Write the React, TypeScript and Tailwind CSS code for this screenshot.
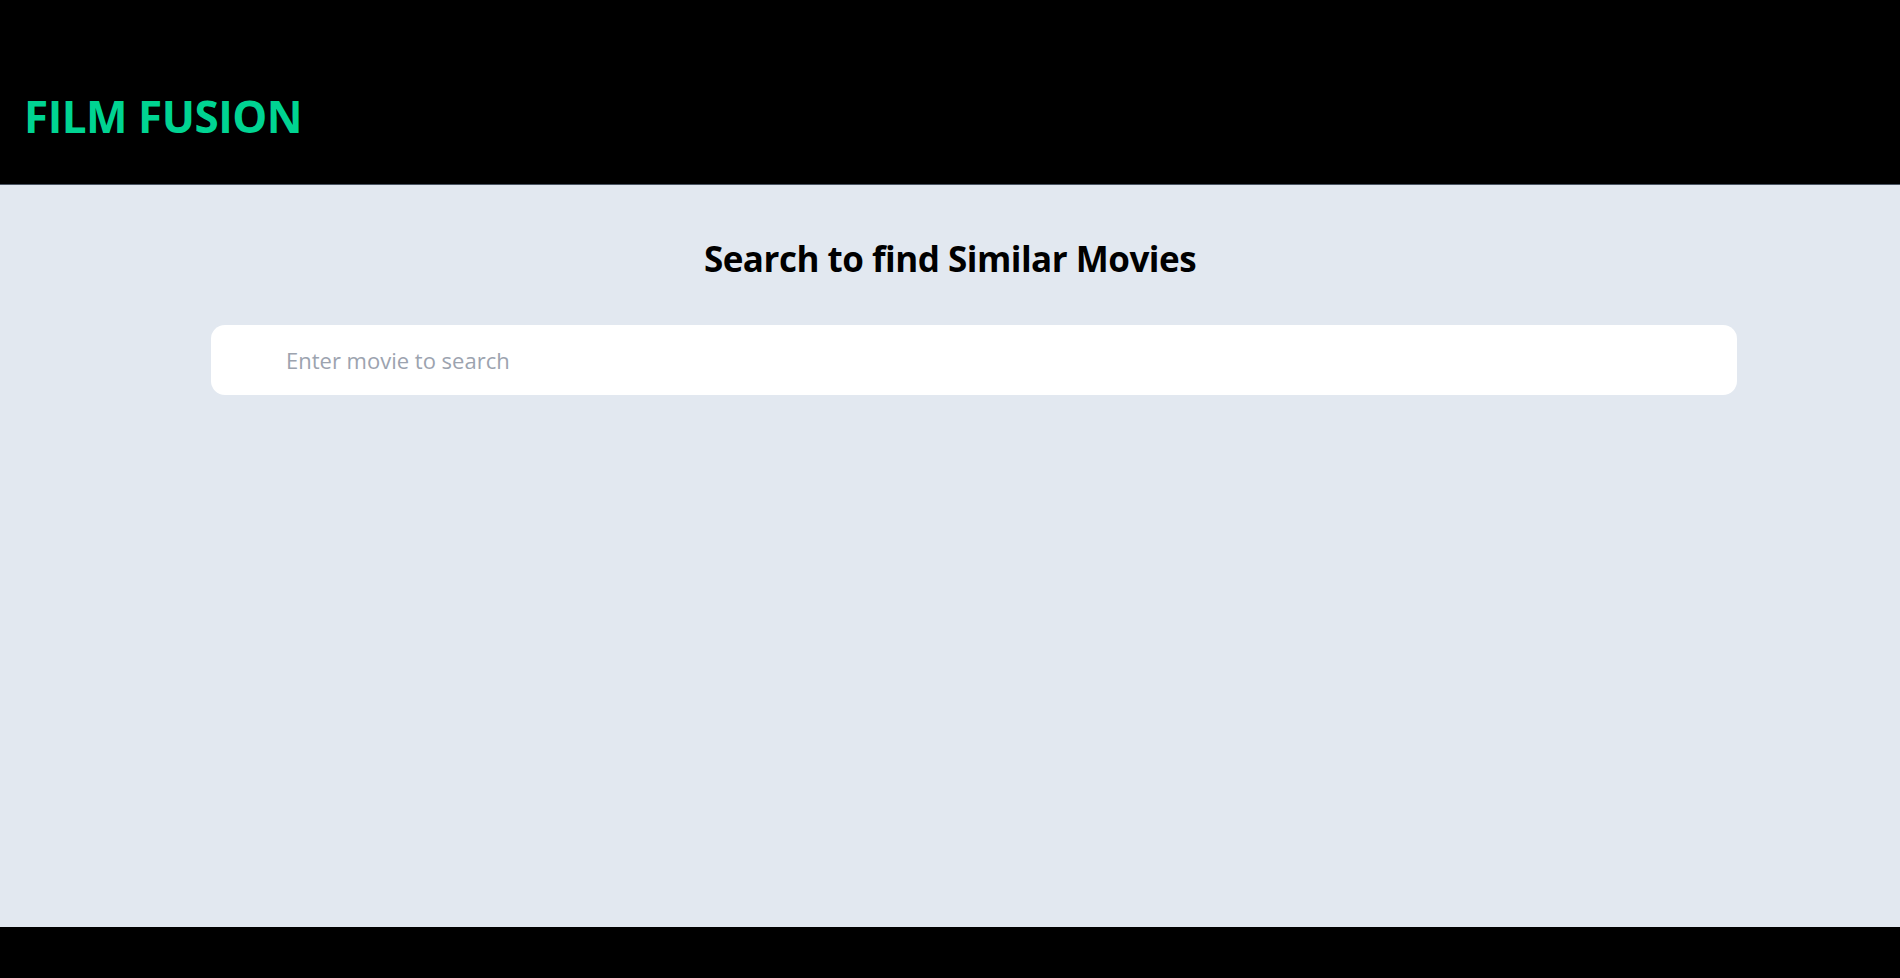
import React from "react";

export default function App() {
  return (
    <div className="flex h-[978px] flex-col bg-[#e2e8f0]" style={{ fontFamily: '"Open Sans", "Noto Sans", sans-serif' }}>
      <header className="h-[185px] shrink-0 border-b border-[#4b5563] bg-black pl-[24px] pt-[91px]">
        <h1 className="text-[44px] font-bold leading-[50px] tracking-[-0.5px] text-[#00d492]">FILM FUSION</h1>
      </header>
      <main className="flex flex-1 flex-col">
        <h2 className="mt-[50px] text-center text-[35px] font-bold leading-[48px] tracking-[-0.5px] text-black">
          Search to find Similar Movies
        </h2>
        <div className="ml-[211px] mt-[42px] w-[1526px]">
          <input
            type="text"
            placeholder="Enter movie to search"
            className="h-[70px] w-full rounded-[14px] bg-white pl-[75px] text-[22px] text-gray-800 outline-none placeholder:text-[#9ca3af]"
          />
        </div>
      </main>
      <footer className="h-[51px] shrink-0 bg-black" />
    </div>
  );
}
